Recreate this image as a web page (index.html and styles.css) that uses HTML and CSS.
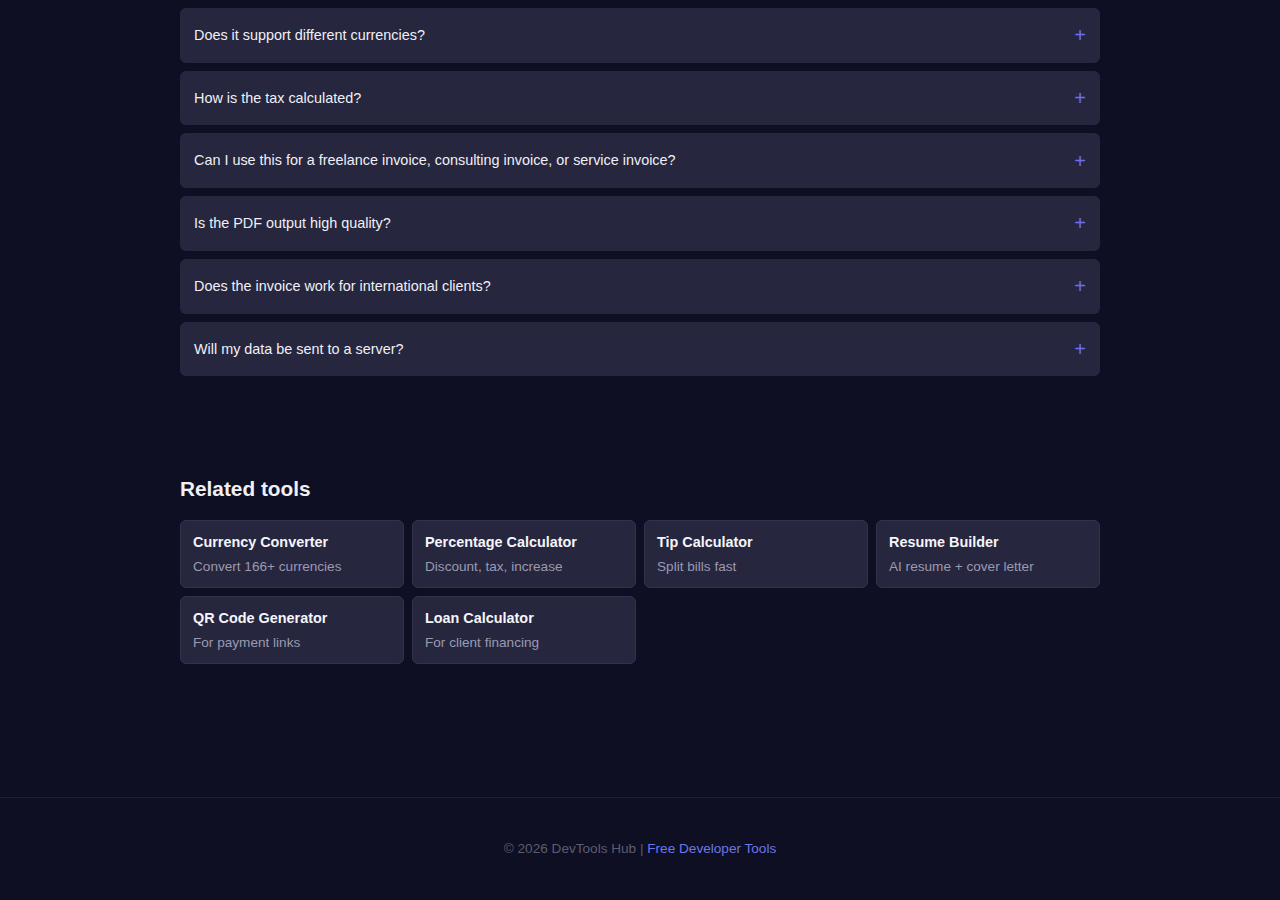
FILE: index.html
```html
<!DOCTYPE html>
<html lang="en">
<head>
  <meta charset="UTF-8">
  <meta name="viewport" content="width=device-width, initial-scale=1.0">
  <title>Invoice Generator - FAQ</title>
  <link rel="stylesheet" href="styles.css">
</head>
<body>
  <main class="container">
    <!-- FAQ list -->
    <section class="faq">
      <div class="faq-item"><span>Does it support different currencies?</span><span class="plus">+</span></div>
      <div class="faq-item"><span>How is the tax calculated?</span><span class="plus">+</span></div>
      <div class="faq-item"><span>Can I use this for a freelance invoice, consulting invoice, or service invoice?</span><span class="plus">+</span></div>
      <div class="faq-item"><span>Is the PDF output high quality?</span><span class="plus">+</span></div>
      <div class="faq-item"><span>Does the invoice work for international clients?</span><span class="plus">+</span></div>
      <div class="faq-item"><span>Will my data be sent to a server?</span><span class="plus">+</span></div>
    </section>

    <!-- Related tools -->
    <section class="related">
      <h2>Related tools</h2>
      <div class="tool-grid">
        <a class="tool-card" href="#"><strong>Currency Converter</strong><span>Convert 166+ currencies</span></a>
        <a class="tool-card" href="#"><strong>Percentage Calculator</strong><span>Discount, tax, increase</span></a>
        <a class="tool-card" href="#"><strong>Tip Calculator</strong><span>Split bills fast</span></a>
        <a class="tool-card" href="#"><strong>Resume Builder</strong><span>AI resume + cover letter</span></a>
        <a class="tool-card" href="#"><strong>QR Code Generator</strong><span>For payment links</span></a>
        <a class="tool-card" href="#"><strong>Loan Calculator</strong><span>For client financing</span></a>
      </div>
    </section>
  </main>

  <footer class="footer">
    <p>&copy; 2026 DevTools Hub | <a href="#">Free Developer Tools</a></p>
  </footer>
</body>
</html>
```

FILE: styles.css
```css
/* Basic styling */
body {
  margin: 0;
  background: #0f0f23;
  color: #f0f0f5;
  font-family: 'Liberation Sans', Arial, sans-serif;
}

.container {
  width: 920px;
  margin: 0 auto;
  padding-top: 8px;
}

/* FAQ */
.faq {
  display: flex;
  flex-direction: column;
  gap: 8px;
}

.faq-item {
  display: flex;
  justify-content: space-between;
  align-items: center;
  background: #26263f;
  border-radius: 6px;
  padding: 18px 14px;
  font-size: 14.4px;
  line-height: 18.7px;
}

.plus {
  color: #6b6ef5;
  font-size: 20px;
  line-height: 18px;
}

/* Related tools */
.related {
  margin-top: 100px;
}

.related h2 {
  font-size: 20.8px;
  line-height: 26px;
  margin: 0 0 18px;
}

.tool-grid {
  display: grid;
  grid-template-columns: repeat(4, 1fr);
  gap: 8px;
}

.tool-card {
  display: flex;
  flex-direction: column;
  gap: 7px;
  background: #26263f;
  border: 1px solid #33334e;
  border-radius: 6px;
  padding: 12px;
  text-decoration: none;
  color: #f5f5fa;
}

.tool-card strong {
  font-size: 14.4px;
  line-height: 18px;
}

.tool-card span {
  font-size: 13.6px;
  line-height: 17px;
  color: #9a9ab2;
}

/* Footer */
.footer {
  margin-top: 133px;
  border-top: 1px solid #1e1e36;
  padding: 42px 0 44px;
  text-align: center;
  font-size: 13.6px;
  color: #5c5c70;
}

.footer p {
  margin: 0;
  line-height: 17px;
}

.footer a {
  color: #6a78ec;
  text-decoration: none;
}
```
